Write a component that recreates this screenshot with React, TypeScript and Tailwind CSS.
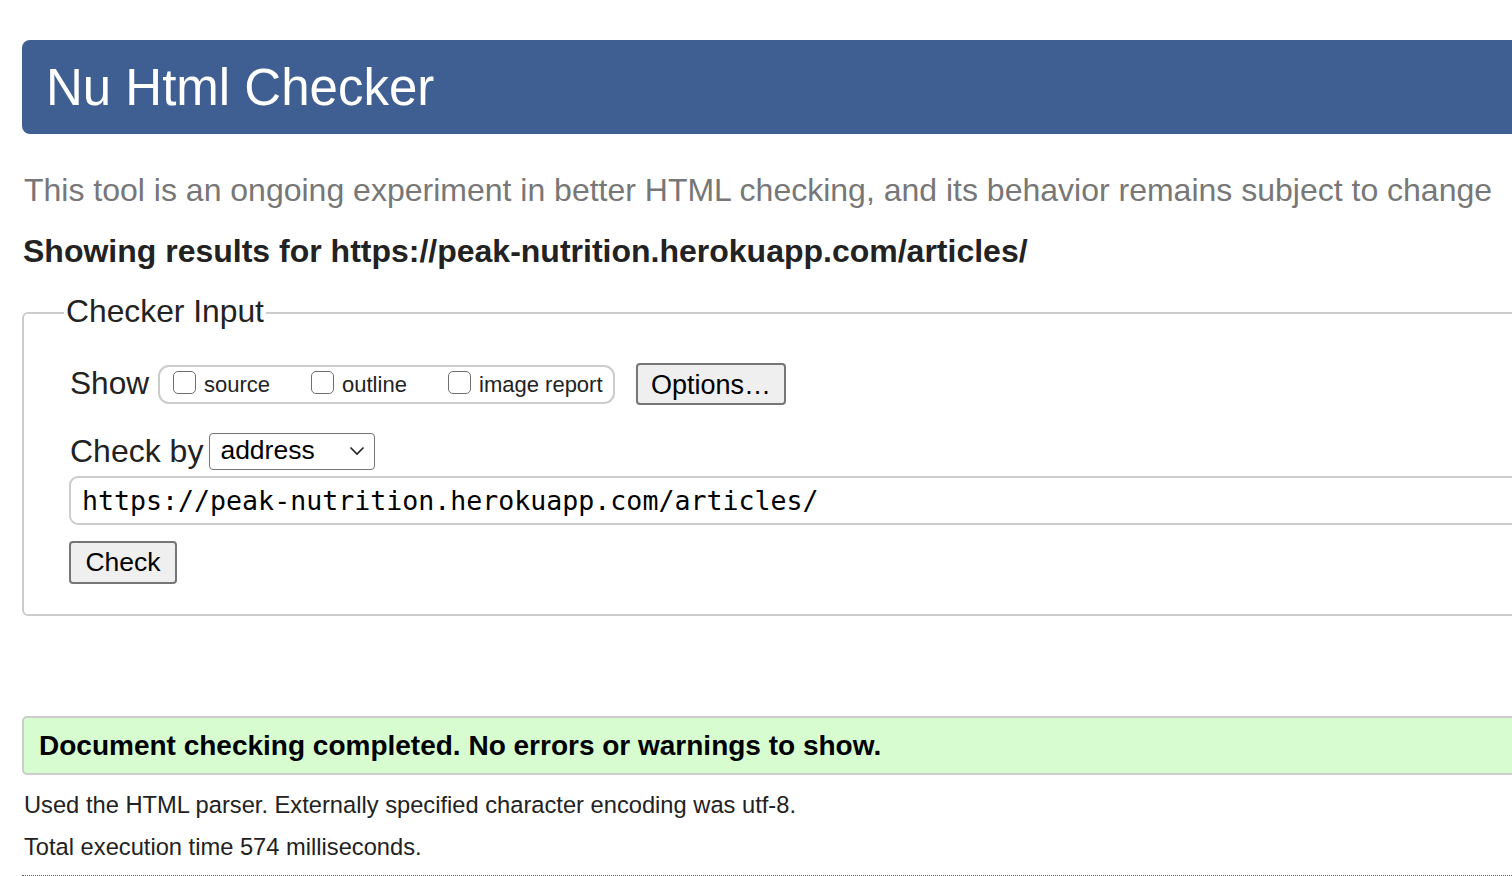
import React from "react";

function Box() {
  return (
    <span className="inline-block w-[23px] h-[23px] rounded-[5px] border-[1.5px] border-[#6f6f6f] bg-white mr-[8px] translate-y-[-2px]" />
  );
}

export default function App() {
  return (
    <div className="w-[1512px] h-[876px] overflow-hidden bg-white font-['Liberation_Sans',Arial,sans-serif] text-[#222]">
      <div className="w-[1620px] pl-[22px] pt-[40px]">
        <div className="h-[94px] rounded-[8px] bg-[#3f5e91] flex items-center pl-[24px]">
          <h1 className="text-[51px] leading-none text-white">Nu Html Checker</h1>
        </div>
        <p className="mt-[39px] ml-[2px] text-[32px] leading-[34px] text-[#777] whitespace-nowrap">
          This tool is an ongoing experiment in better HTML checking, and its behavior remains subject to change
        </p>
        <p className="mt-[27px] ml-[1px] text-[32px] leading-[34px] font-bold text-[#222] whitespace-nowrap">
          Showing results for https://peak-nutrition.herokuapp.com/articles/
        </p>
        <div className="relative mt-[27px]">
          <div className="absolute left-[42px] top-[-1px] bg-white px-[2px] text-[31.8px] leading-[34px] text-[#222]">
            Checker Input
          </div>
          <div className="pt-[17px]">
            <div className="border-2 border-[#cccccc] rounded-[6px] h-[304px] pl-[46px] pt-[49px]">
              <div className="flex items-center h-[42px]">
                <span className="text-[31.6px] leading-none mr-[9px]">Show</span>
                <div className="flex items-center h-[39px] w-[457px] border-2 border-[#cccccc] rounded-[11px] pl-[13px] text-[22px]">
                  <label className="flex items-center w-[138px]"><Box />source</label>
                  <label className="flex items-center w-[137px]"><Box />outline</label>
                  <label className="flex items-center"><Box />image report</label>
                </div>
                <button className="ml-[21px] h-[42px] w-[150px] bg-[#efefef] border-2 border-[#767676] rounded-[4px] text-[27px] text-black">
                  Options…
                </button>
              </div>
              <div className="flex items-center mt-[27px] h-[38px]">
                <span className="text-[32px] leading-none mr-[6px]">Check by</span>
                <div className="flex items-center justify-between h-[37px] w-[166px] border-[1.5px] border-[#767676] rounded-[4px] pl-[10px] pr-[9px] text-[26.5px] text-black bg-white">
                  <span>address</span>
                  <svg width="16" height="10" viewBox="0 0 16 10" fill="none">
                    <path d="M1.5 1.5 L8 8 L14.5 1.5" stroke="#222" strokeWidth="1.6" />
                  </svg>
                </div>
              </div>
              <div className="mt-[6px] ml-[-1px] h-[49px] border-2 border-[#cccccc] rounded-[9px] flex items-center pl-[11px] font-['DejaVu_Sans_Mono',monospace] text-[26.6px] text-black">
                https://peak-nutrition.herokuapp.com/articles/
              </div>
              <button className="mt-[16px] ml-[-1px] h-[43px] w-[108px] bg-[#efefef] border-2 border-[#767676] rounded-[4px] text-[26.5px] text-black">
                Check
              </button>
            </div>
          </div>
        </div>
        <div className="mt-[100px] h-[59px] bg-[#d6fcd0] border-2 border-[#cccccc] rounded-[5px] flex items-center pl-[15px] text-[28px] font-bold text-black">
          Document checking completed. No errors or warnings to show.
        </div>
        <p className="mt-[17px] ml-[2px] text-[23.7px] leading-[26px]">
          Used the HTML parser. Externally specified character encoding was utf-8.
        </p>
        <p className="mt-[16px] ml-[2px] text-[23.7px] leading-[26px]">
          Total execution time 574 milliseconds.
        </p>
        <div className="mt-[15px] border-t border-dotted border-[#666]" />
      </div>
    </div>
  );
}
